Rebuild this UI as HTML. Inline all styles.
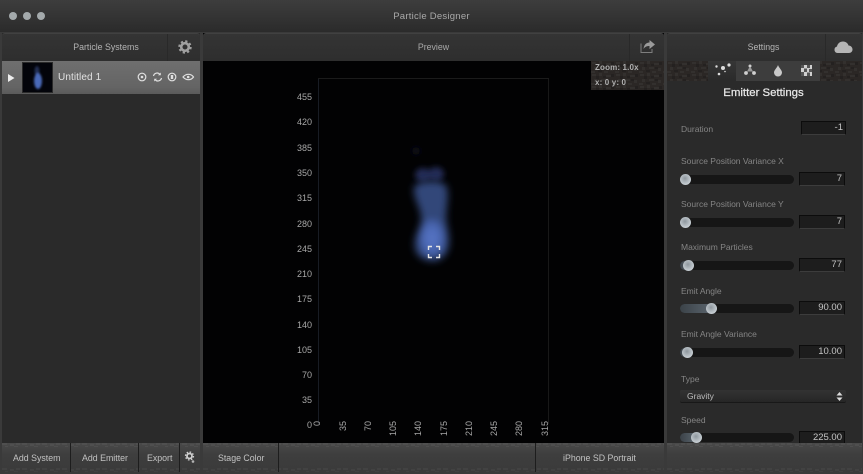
<!DOCTYPE html>
<html><head><meta charset="utf-8">
<style>
*{box-sizing:border-box;margin:0;padding:0}
html,body{width:863px;height:474px;overflow:hidden;background:#2b2b2b;font-family:"Liberation Sans",sans-serif}
.a{position:absolute}
.t{position:absolute;white-space:nowrap;line-height:12px}
.hdr{position:absolute;top:33px;height:28px;background:linear-gradient(#343434,#2e2e2e);border-radius:3px 3px 0 0;border-top:1px solid #414141}
.lab{position:absolute;left:681px;font-size:8.5px;color:#858585;white-space:nowrap;line-height:12px}
.inp{position:absolute;left:799px;width:46px;height:14px;background:#1d1d1d;border:1px solid #0c0c0c;border-bottom-color:#3c3c3c;color:#c4c4c4;font-size:9.5px;text-align:right;padding-right:2px;line-height:12px}
.trk{position:absolute;left:680px;width:114px;height:9px;border-radius:5px;background:#161616}
.fil{position:absolute;left:680px;height:9px;border-radius:5px 0 0 5px;background:linear-gradient(90deg,#3b4248,#59636c)}
.th{position:absolute;width:11px;height:11px;border-radius:50%;background:radial-gradient(circle at 45% 40%,#8e979e,#c7ced3 70%,#9aa0a5)}
.ylab{position:absolute;left:288px;width:24px;text-align:right;font-size:9px;color:#a8a8a8;line-height:10px}
.xlab{position:absolute;height:9px;width:22px;transform-origin:0 0;transform:rotate(-90deg);font-size:9px;color:#a8a8a8;line-height:9px;text-align:right;white-space:nowrap}
.btnbar{position:absolute;top:443px;height:29px;background:linear-gradient(#4a4a4a,#3e3e3e 40%,#3a3a3a)}
.bt{position:absolute;top:449px;font-size:8.8px;color:#c2c2c2;line-height:18px;white-space:nowrap}
.sep{position:absolute;width:1px;background:#1d1d1d}
.hd{position:absolute;top:41px;text-align:center;font-size:8.8px;color:#b4b4b4;white-space:nowrap;line-height:12px}
</style></head><body>

<svg class="a" style="left:0;top:0;z-index:0" width="0" height="0"><defs>
<pattern id="camo" patternUnits="userSpaceOnUse" width="24" height="12">
<rect width="24" height="12" fill="#2b2725"/>
<path d="M1 1h4v2H1zM8 0h3v3H8zM15 2h5v2h-5zM3 6h3v3H3zM10 6h5v2h-5zM19 7h3v3h-3zM0 10h4v2H0zM13 10h4v2h-4z" fill="#33302e"/>
<path d="M5 3h3v3H5zM12 3h3v2h-3zM20 1h3v3h-3zM7 9h4v2H7zM16 6h3v2h-3z" fill="#242120"/>
</pattern>
<pattern id="dith" patternUnits="userSpaceOnUse" width="20" height="5">
<path d="M0 0h5v2H0zM8 1h4v2H8zM14 0h4v2h-4zM3 3h3v1H3zM12 3h4v1h-4z" fill="#4f4f4f"/>
</pattern>
</defs></svg>

<!-- title bar -->
<div class="a" style="left:0;top:0;width:863px;height:32px;background:linear-gradient(#3d3d3d,#2b2b2b);"></div>
<div class="a" style="left:9px;top:12px;width:8px;height:8px;border-radius:50%;background:#a3a9ab"></div>
<div class="a" style="left:23px;top:12px;width:8px;height:8px;border-radius:50%;background:#a3a9ab"></div>
<div class="a" style="left:37px;top:12px;width:8px;height:8px;border-radius:50%;background:#a3a9ab"></div>
<div class="t" style="left:0;width:863px;top:11px;text-align:center;font-size:9.5px;letter-spacing:.25px;color:#a9a9a9">Particle Designer</div>

<!-- gutters -->
<div class="a" style="left:0;top:32px;width:863px;height:442px;background:#3a3a3a"></div>

<!-- left panel -->
<div class="a" style="left:2px;top:33px;width:198px;height:439px;background:#2a2a2a"></div>
<div class="hdr" style="left:2px;width:198px"></div>
<div class="sep" style="left:167px;top:34px;height:27px;background:#292929"></div>
<div class="hd" style="left:2px;width:208px">Particle Systems</div>
<svg class="a" style="left:178px;top:40px" width="14" height="14" viewBox="0 0 14 14" fill="none" stroke="#a0a0a0"><circle cx="7" cy="7" r="3.800" stroke-width="2.600"/><circle cx="7" cy="7" r="5.700" stroke-width="2" stroke-dasharray="2.240 2.240"/></svg>

<!-- selected row -->
<div class="a" style="left:2px;top:61px;width:198px;height:33px;background:linear-gradient(#6f6f6f,#646464 80%,#5a5a5a)"></div>
<svg class="a" style="left:8px;top:74px" width="7" height="8"><path d="M0 0L6.500 4L0 8z" fill="#ededed"/></svg>
<div class="a" style="left:22px;top:62px;width:31px;height:31px;background:#03040a;border:1px solid #2a2a2a;overflow:hidden">
<svg width="29" height="29" style="display:block"><defs><filter id="f0" x="-60%" y="-60%" width="220%" height="220%"><feGaussianBlur stdDeviation="1"/></filter></defs>
<g filter="url(#f0)"><ellipse cx="14" cy="8" rx="2.500" ry="5" fill="#232d52"/><ellipse cx="15" cy="18" rx="4" ry="8" fill="#4a69b8"/></g></svg></div>
<div class="t" style="left:58px;top:72px;font-size:10px;letter-spacing:.1px;color:#e2e2e2">Untitled 1</div>
<svg class="a" style="left:135px;top:70px" width="62" height="14" viewBox="0 0 62 14" fill="none" stroke="#e0e0e0" stroke-width="1.200">
<circle cx="7" cy="7" r="3.800"/><circle cx="7" cy="7" r="1.300" fill="#e0e0e0" stroke="none"/>
<path d="M18.500 6a3.700 3.700 0 016.300-1.800M26.500 8a3.700 3.700 0 01-6.300 1.800"/><path d="M25.800 2.500v2.800h-2.800zM19.200 11.500V8.700h2.800z" fill="#e0e0e0" stroke="none"/>
<circle cx="37" cy="7" r="3.800"/><rect x="35.800" y="5" width="2.400" height="4" fill="#e0e0e0" stroke="none"/>
<path d="M48 7c3-3.600 8-3.600 10.500 0c-2.500 3.600-7.500 3.600-10.500 0z"/><circle cx="53.200" cy="7" r="1.300" fill="#e0e0e0" stroke="none"/>
</svg>

<!-- left bottom bar -->
<div class="btnbar" style="left:2px;width:198px"></div>
<svg class="a" style="left:2px;top:443px" width="198" height="29"><rect width="198" height="5" fill="url(#dith)"/><rect y="24" width="198" height="5" fill="url(#dith)" opacity=".35"/></svg>
<div class="sep" style="left:70px;top:443px;height:29px"></div>
<div class="sep" style="left:138px;top:443px;height:29px"></div>
<div class="sep" style="left:179px;top:443px;height:29px"></div>
<div class="bt" style="left:13px">Add System</div>
<div class="bt" style="left:82px">Add Emitter</div>
<div class="bt" style="left:147px">Export</div>
<svg class="a" style="left:183px;top:450px" width="13" height="14" viewBox="0 0 13 14" fill="none" stroke="#cfcfcf"><circle cx="6.500" cy="6" r="2.500" stroke-width="1.800"/><circle cx="6.500" cy="6" r="4" stroke-width="1.300" stroke-dasharray="1.570 1.570"/><circle cx="10" cy="11.500" r="1.300" fill="#b5b5b5" stroke="none"/></svg>

<!-- center panel -->
<div class="a" style="left:203px;top:33px;width:461px;height:439px;background:#020203"></div>
<div class="hdr" style="left:203px;width:461px"></div>
<div class="sep" style="left:629px;top:34px;height:27px;background:#292929"></div>
<div class="hd" style="left:203px;width:461px;color:#a8a8a8">Preview</div>
<svg class="a" style="left:640px;top:40px" width="16" height="13" viewBox="0 0 16 13" fill="none"><path d="M1 3.500V12.500H12V9" stroke="#7e7e7e" stroke-width="1"/><path d="M15 4.500L9.500 0V2.500C6 2.500 4 5 3.500 9C5 6.500 7 6 9.500 6V9z" fill="#9b9b9b"/></svg>

<!-- info box -->
<svg class="a" style="left:591px;top:61px" width="73" height="29"><rect width="73" height="29" fill="url(#camo)"/></svg>
<div class="t" style="left:595px;top:62px;font-size:8px;font-weight:bold;letter-spacing:.15px;color:#b0b0b0">Zoom: 1.0x</div>
<div class="t" style="left:595px;top:77px;font-size:8px;font-weight:bold;letter-spacing:.15px;color:#b0b0b0">x: 0 y: 0</div>

<!-- axes -->
<div class="a" style="left:318px;top:78px;width:1px;height:346px;background:#181c24"></div>
<div class="a" style="left:548px;top:78px;width:1px;height:346px;background:#181818"></div>
<div class="a" style="left:318px;top:78px;width:231px;height:1px;background:#1b1b1b"></div>
<div class="ylab" style="top:92px">455</div>
<div class="ylab" style="top:117px">420</div>
<div class="ylab" style="top:143px">385</div>
<div class="ylab" style="top:168px">350</div>
<div class="ylab" style="top:193px">315</div>
<div class="ylab" style="top:219px">280</div>
<div class="ylab" style="top:244px">245</div>
<div class="ylab" style="top:269px">210</div>
<div class="ylab" style="top:294px">175</div>
<div class="ylab" style="top:320px">140</div>
<div class="ylab" style="top:345px">105</div>
<div class="ylab" style="top:370px">70</div>
<div class="ylab" style="top:395px">35</div>
<div class="ylab" style="top:420px">0</div>
<div class="xlab" style="left:313px;top:443px">0</div>
<div class="xlab" style="left:339px;top:443px">35</div>
<div class="xlab" style="left:364px;top:443px">70</div>
<div class="xlab" style="left:389px;top:443px">105</div>
<div class="xlab" style="left:414px;top:443px">140</div>
<div class="xlab" style="left:440px;top:443px">175</div>
<div class="xlab" style="left:465px;top:443px">210</div>
<div class="xlab" style="left:490px;top:443px">245</div>
<div class="xlab" style="left:515px;top:443px">280</div>
<div class="xlab" style="left:541px;top:443px">315</div>

<!-- particle -->
<svg class="a" style="left:400px;top:140px" width="70" height="140"><defs><filter id="f1" x="-60%" y="-40%" width="220%" height="180%"><feGaussianBlur stdDeviation="3.600"/></filter><filter id="f2" x="-60%" y="-60%" width="220%" height="220%"><feGaussianBlur stdDeviation="3"/></filter></defs>
<ellipse cx="16" cy="11" rx="4" ry="4" fill="#0a0e1c" filter="url(#f2)"/>
<g filter="url(#f2)"><ellipse cx="23" cy="35" rx="8" ry="7" fill="#222c54"/><ellipse cx="36" cy="34" rx="8" ry="7" fill="#222c54"/></g>
<g filter="url(#f1)"><path d="M14 48C15 40 45 38 47 48C49 58 46 68 46 78C47 88 50 94 49 104C48 117 38 122 31 121C20 120 13 113 15 100C16 92 22 86 21 76C20 66 13 58 14 48z" fill="#334679"/><ellipse cx="32" cy="98" rx="12" ry="18" fill="#4763ad"/><ellipse cx="32" cy="98" rx="7" ry="10" fill="#5371c0"/></g></svg>
<svg class="a" style="left:427px;top:245px" width="14" height="14" fill="none" stroke="#e4e4e4" stroke-width="1.400"><path d="M1.500 5V1.500H5M9 1.500H12.500V5M12.500 9V12.500H9M5 12.500H1.500V9"/></svg>

<!-- center bottom bar -->
<div class="btnbar" style="left:203px;width:461px"></div>
<svg class="a" style="left:203px;top:443px" width="461" height="29"><rect width="461" height="5" fill="url(#dith)"/><rect y="24" width="461" height="5" fill="url(#dith)" opacity=".35"/></svg>
<div class="sep" style="left:278px;top:443px;height:29px"></div>
<div class="sep" style="left:535px;top:443px;height:29px"></div>
<div class="bt" style="left:218px">Stage Color</div>
<div class="bt" style="left:563px">iPhone SD Portrait</div>

<!-- right panel -->
<div class="a" style="left:667px;top:33px;width:195px;height:439px;background:#2a2a2a"></div>
<div class="hdr" style="left:667px;width:195px"></div>
<div class="sep" style="left:825px;top:34px;height:27px;background:#292929"></div>
<div class="hd" style="left:667px;width:193px">Settings</div>
<svg class="a" style="left:834px;top:41px" width="19" height="12" viewBox="0 0 19 12"><path d="M3.500 12A3.300 3.300 0 013 5.500C3.500 2.500 6 .5 9 .5C12 .5 14 2.500 14.500 4.500C17 4.500 18.500 6.500 18.500 8.500C18.500 10.500 17 12 15 12z" fill="#b5b5b5"/></svg>

<!-- tab strip -->
<svg class="a" style="left:667px;top:61px" width="195" height="20"><rect width="195" height="20" fill="url(#camo)"/></svg>
<div class="a" style="left:708px;top:61px;width:112px;height:20px;background:#3d3d3d"></div>
<div class="a" style="left:708px;top:61px;width:28px;height:20px;background:linear-gradient(#363636,#2a2a2a)"></div>
<svg class="a" style="left:714px;top:62px" width="18" height="17" fill="#dcdcdc"><circle cx="9" cy="6" r="2"/><circle cx="2.500" cy="4.500" r="1.200"/><circle cx="15" cy="3" r="1.600"/><circle cx="5" cy="12" r="1.300"/><circle cx="11" cy="9.500" r=".8"/></svg>
<svg class="a" style="left:743px;top:63px" width="14" height="14" fill="#d0d0d0"><circle cx="7" cy="3" r="1.500"/><circle cx="3" cy="10" r="1.900"/><circle cx="11" cy="10" r="1.900"/><path d="M6.500 4h1L10 8.500H4z" fill="#9a9a9a"/></svg>
<svg class="a" style="left:773px;top:64px" width="10" height="13"><path d="M5 1C6 4 9 6 9 8.500A4 4 0 011 8.500C1 6 4 4 5 1z" fill="#c9c9c9"/></svg>
<svg class="a" style="left:801px;top:65px" width="11" height="11"><rect width="11" height="11" fill="#cfcfcf"/><path d="M0 0h3v3H0zM6 0h3v3H6zM3 3.500h3V7H3zM8 4h3v3H8zM0 7h3v4H0zM6 7.500h3V11H6z" fill="#555"/></svg>

<div class="t" style="left:667px;width:193px;top:86px;text-align:center;font-size:11.400px;line-height:14px;color:#e8e8e8;-webkit-text-stroke:.25px #e8e8e8">Emitter Settings</div>

<div class="lab" style="top:123px">Duration</div>
<div class="inp" style="top:121px;left:801px;width:45px">-1</div>

<div class="lab" style="top:155px">Source Position Variance X</div>
<div class="trk" style="top:175px"></div><div class="th" style="left:680px;top:174px"></div>
<div class="inp" style="top:172px">7</div>

<div class="lab" style="top:198px">Source Position Variance Y</div>
<div class="trk" style="top:218px"></div><div class="th" style="left:680px;top:217px"></div>
<div class="inp" style="top:215px">7</div>

<div class="lab" style="top:241px">Maximum Particles</div>
<div class="trk" style="top:261px"></div><div class="fil" style="top:261px;width:8px"></div><div class="th" style="left:683px;top:260px"></div>
<div class="inp" style="top:258px">77</div>

<div class="lab" style="top:285px">Emit Angle</div>
<div class="trk" style="top:304px"></div><div class="fil" style="top:304px;width:31px"></div><div class="th" style="left:706px;top:303px"></div>
<div class="inp" style="top:301px">90.00</div>

<div class="lab" style="top:328px">Emit Angle Variance</div>
<div class="trk" style="top:348px"></div><div class="fil" style="top:348px;width:8px"></div><div class="th" style="left:682px;top:347px"></div>
<div class="inp" style="top:345px">10.00</div>

<div class="lab" style="top:373px">Type</div>
<div class="a" style="left:680px;top:390px;width:166px;height:13px;border-radius:2px;background:linear-gradient(#333,#262626);border-bottom:1px solid #181818"></div>
<div class="t" style="left:687px;top:390px;font-size:8.500px;color:#bcbcbc">Gravity</div>
<svg class="a" style="left:836px;top:392px" width="7" height="9" fill="#dcdcdc"><path d="M3.500 0L6.500 3.500H.5zM3.500 9L.5 5.500H6.500z"/></svg>

<div class="lab" style="top:414px">Speed</div>
<div class="trk" style="top:433px"></div><div class="fil" style="top:433px;width:16px"></div><div class="th" style="left:691px;top:432px"></div>
<div class="inp" style="top:431px">225.00</div>

<div class="btnbar" style="left:667px;width:195px"></div>
<svg class="a" style="left:667px;top:443px" width="195" height="29"><rect width="195" height="5" fill="url(#dith)"/><rect y="24" width="195" height="5" fill="url(#dith)" opacity=".35"/></svg>
</body></html>
